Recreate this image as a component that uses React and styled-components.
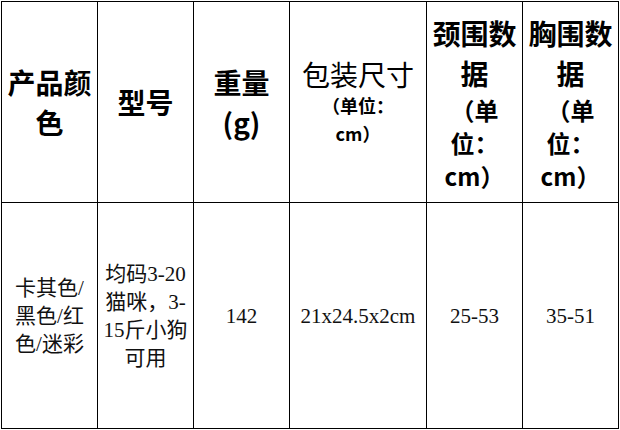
import React from "react";
import styled, { createGlobalStyle } from "styled-components";

//styled comp

const GlobalStyle = createGlobalStyle`
  body {
    margin: 0;
    background: #fff;
  }
`;

const Sheet = styled.div`
  display: grid;
  grid-template-columns: 96px 96px 96px 137px 96px 96px;
  grid-template-rows: 201px 226px;
  width: max-content;
  margin: 1px 0 0 1px;
  border-top: 1px solid #000;
  border-left: 1px solid #000;
`;

const Cell = styled.div`
  box-sizing: border-box;
  display: flex;
  flex-direction: column;
  align-items: center;
  justify-content: center;
  padding: 0 2px;
  text-align: center;
  border-right: 1px solid #000;
  border-bottom: 1px solid #000;
  color: #000;
`;

const Head = styled.div`
  font-family: "Noto Sans CJK SC", "Noto Sans", sans-serif;
  font-size: ${(p) => p.$size || 28}px;
  font-weight: ${(p) => (p.$thin ? 400 : 700)};
  line-height: ${(p) => p.$lh || 40}px;
`;

const Body = styled.div`
  font-family: "Liberation Serif", "Noto Sans CJK SC", serif;
  font-size: 21px;
  line-height: 28px;
  color: #111;
`;

const headers = [
  { text: "产品颜色" },
  { text: "型号" },
  { text: "重量(g)" },
];

const App = () => {
  return (
    <>
      <GlobalStyle />
      <Sheet>
        {headers.map((h) => (
          <Cell key={h.text}>
            <Head>{h.text}</Head>
          </Cell>
        ))}
        <Cell>
          <Head $thin $lh={34}>
            包装尺寸
          </Head>
          <Head $size={18} $lh={28}>
            （单位：
            <br />
            cm）
          </Head>
        </Cell>
        <Cell>
          <Head>颈围数据</Head>
          <Head $size={24} $lh={33}>
            （单
            <br />
            位：
            <br />
            cm）
          </Head>
        </Cell>
        <Cell>
          <Head>胸围数据</Head>
          <Head $size={24} $lh={33}>
            （单
            <br />
            位：
            <br />
            cm）
          </Head>
        </Cell>

        <Cell>
          <Body>
            卡其色/
            <br />
            黑色/红
            <br />
            色/迷彩
          </Body>
        </Cell>
        <Cell>
          <Body>
            均码3-20
            <br />
            猫咪，3-
            <br />
            15斤小狗
            <br />
            可用
          </Body>
        </Cell>
        <Cell>
          <Body>142</Body>
        </Cell>
        <Cell>
          <Body>21x24.5x2cm</Body>
        </Cell>
        <Cell>
          <Body>25-53</Body>
        </Cell>
        <Cell>
          <Body>35-51</Body>
        </Cell>
      </Sheet>
    </>
  );
};

export default App;
